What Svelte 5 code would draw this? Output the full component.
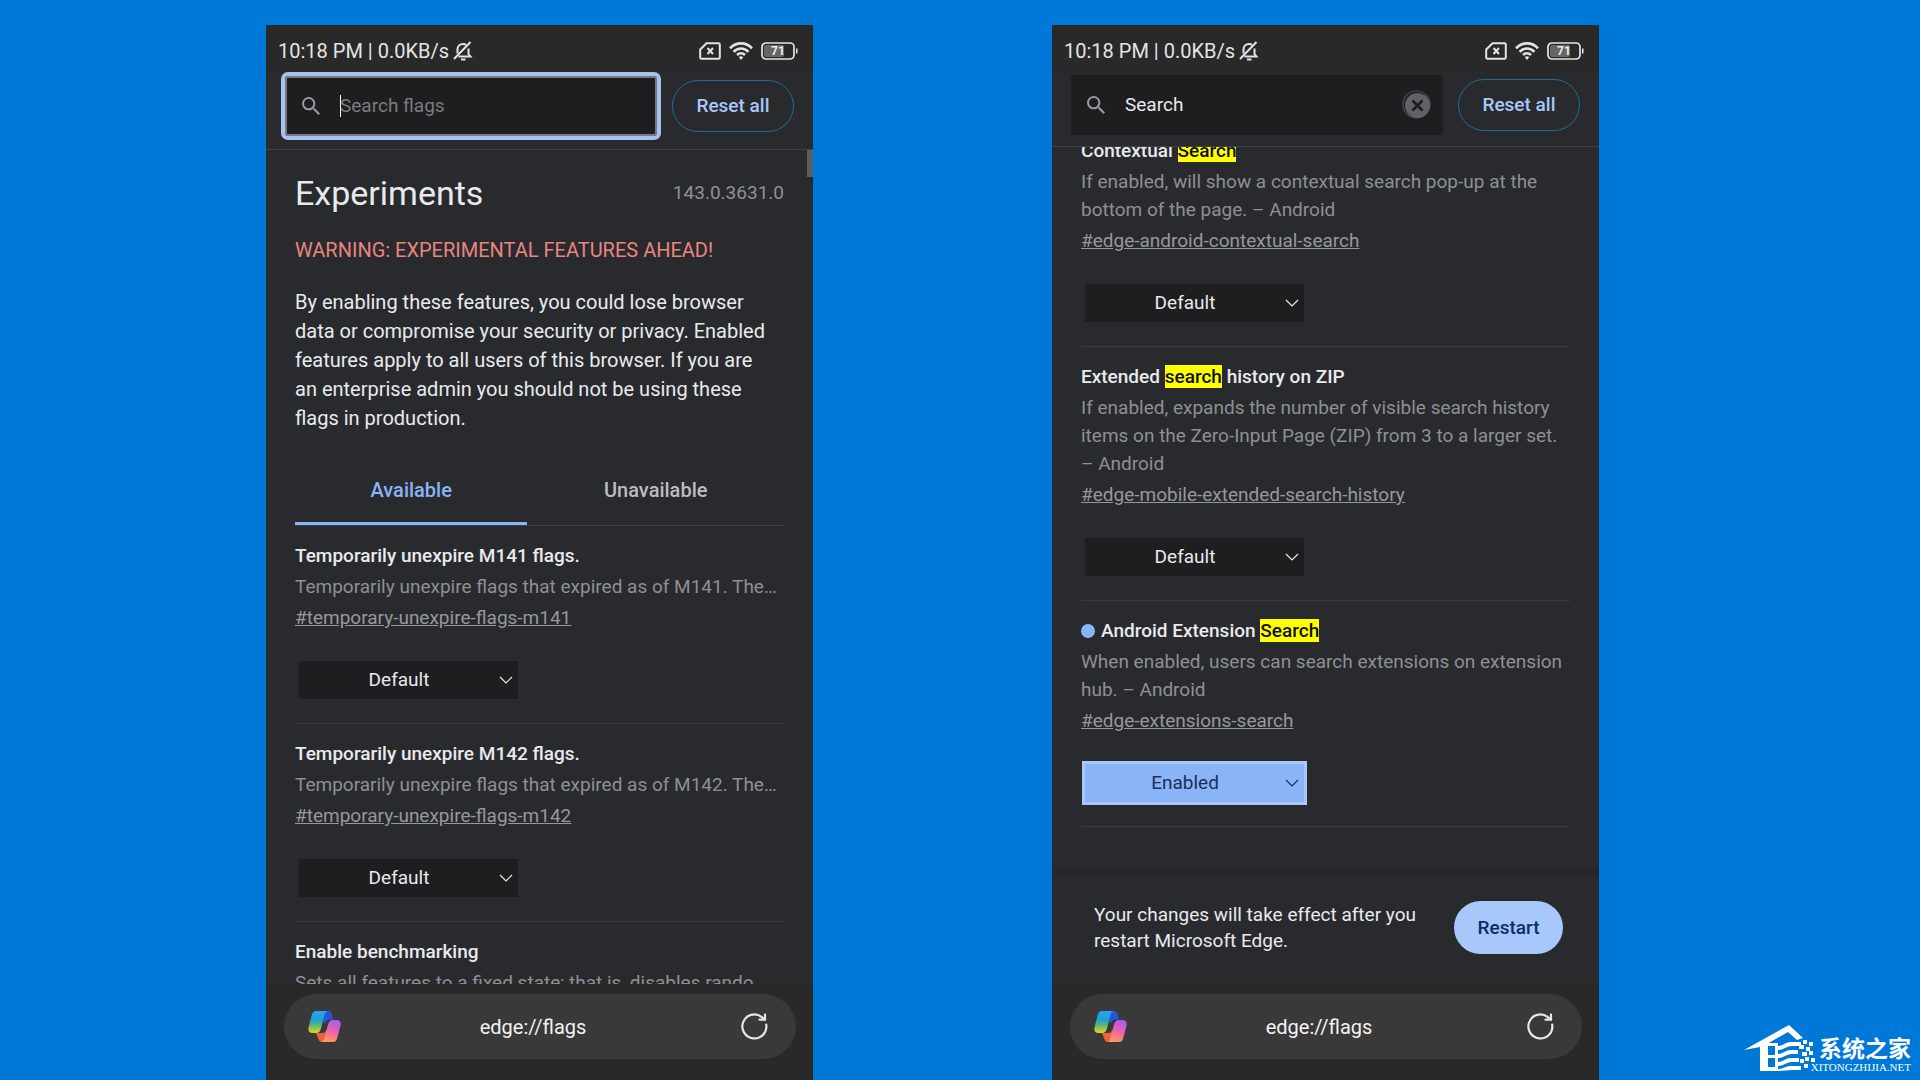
<script lang="ts">
  type Flag = {
    id: string;
    title: string;
    match?: string;
    rest?: string;
    text: string;
    value?: string;
  };

  const available: Flag[] = [
    { id: 'temporary-unexpire-flags-m141', title: 'Temporarily unexpire M141 flags.', text: 'Temporarily unexpire flags that expired as of M141. These flags will be removed soon. – Android' },
    { id: 'temporary-unexpire-flags-m142', title: 'Temporarily unexpire M142 flags.', text: 'Temporarily unexpire flags that expired as of M142. These flags will be removed soon. – Android' },
    { id: 'enable-benchmarking', title: 'Enable benchmarking', text: 'Sets all features to a fixed state; that is, disables randomization for feature states.' }
  ];

  const results: Flag[] = [
    { id: 'edge-android-contextual-search', title: 'Contextual ', match: 'Search', text: 'If enabled, will show a contextual search pop-up at the bottom of the page. – Android' },
    { id: 'edge-mobile-extended-search-history', title: 'Extended ', match: 'search', rest: ' history on ZIP', text: 'If enabled, expands the number of visible search history items on the Zero-Input Page (ZIP) from 3 to a larger set. – Android' },
    { id: 'edge-extensions-search', title: 'Android Extension ', match: 'Search', text: 'When enabled, users can search extensions on extension hub. – Android', value: 'Enabled' }
  ];

  let query = $state('Search');
</script>

{#snippet statusBar()}
  <div class="status">
    <span>10:18 PM | 0.0KB/s</span>
    <svg class="bell" width="20" height="20" viewBox="0 0 20 20" fill="none" stroke="#e4e4e4" stroke-width="2">
      <path d="M4.5 12.5V8.5C4.5 5 7 3 10 3c1.2 0 2.3.3 3.1.8M15.5 7.5V13l2 2.500H5.500" />
      <path d="M1 18L17.500 1" />
      <path d="M8 18.500h4.500" />
    </svg>
    <div class="status-icons">
      <svg width="22" height="18" viewBox="0 0 22 18" fill="none" stroke="#e4e4e4" stroke-width="2">
        <path d="M7.500 1.200H19.500a1.300 1.300 0 0 1 1.300 1.300V15.500a1.300 1.300 0 0 1-1.300 1.300H2.500A1.300 1.300 0 0 1 1.200 15.500V7.500z" />
        <path d="M8.500 6l5.500 6M14 6l-5.500 6" />
      </svg>
      <svg width="24" height="18" viewBox="0 0 24 18" fill="none" stroke="#e4e4e4" stroke-width="2.600">
        <path d="M1 6.300C7-.3 17-.3 23 6.300" />
        <path d="M4.600 9.800c4.300-4.400 10.500-4.400 14.800 0" />
        <path d="M8 13c2.400-2.300 5.600-2.300 8 0" />
        <path d="M9.800 15.200L12 18l2.200-2.800c-1.200-1.200-3.200-1.200-4.400 0z" fill="#e4e4e4" stroke="none" />
      </svg>
      <svg width="37" height="18" viewBox="0 0 37 18">
        <rect x="3" y="3" width="20" height="12" rx="2" fill="#666" />
        <rect x="1" y="1" width="32" height="16" rx="4" fill="none" stroke="#e4e4e4" stroke-width="1.700" />
        <path d="M35 6.500h1.500v5H35z" fill="#e4e4e4" />
        <text x="17" y="13" text-anchor="middle" font-size="12" font-weight="700" fill="#eee">71</text>
      </svg>
    </div>
  </div>
{/snippet}

{#snippet searchIcon()}
  <svg class="magnifier" width="18" height="18" viewBox="3 3 17.500 17.500" fill="#9a9b9e">
    <path d="M15.500 14h-.79l-.28-.27A6.470 6.470 0 0 0 16 9.500 6.500 6.500 0 1 0 9.500 16c1.610 0 3.090-.59 4.230-1.570l.27.28v.79l5 4.990L20.490 19l-4.990-5zm-6 0C7.010 14 5 11.990 5 9.500S7.010 5 9.500 5 14 7.010 14 9.500 11.990 14 9.500 14z" />
  </svg>
{/snippet}

{#snippet flagRow(flag: Flag, clamp: boolean)}
  <section class="flag">
    <h3>
      {#if flag.value}<span class="dot"></span>{/if}
      <label for={flag.id}>{flag.title}{#if flag.match}<mark>{flag.match}</mark>{/if}{flag.rest ?? ''}</label>
    </h3>
    <p class:clamp>{flag.text}</p>
    <a href="#{flag.id}">#{flag.id}</a>
    <div class="choice" class:changed={flag.value}>
      <select id={flag.id} value={flag.value ?? 'Default'}>
        <option>Default</option>
        <option>Enabled</option>
        <option>Disabled</option>
      </select>
      <svg width="14" height="8" viewBox="0 0 14 8" fill="none" stroke="currentColor" stroke-width="1.200">
        <path d="M1 1l6 6 6-6" />
      </svg>
    </div>
  </section>
{/snippet}

{#snippet addressBar(name: string)}
  <footer class="bottom">
    <div class="pill">
      <button class="icon-button" aria-label="Copilot">
        <svg width="33" height="31" viewBox="0 0 33 31">
          <defs>
            <linearGradient id="{name}-cool" x1="0" y1="0" x2="0" y2="1">
              <stop offset="0" stop-color="#2aa5ee" />
              <stop offset=".4" stop-color="#1f9fd0" />
              <stop offset=".7" stop-color="#6abf62" />
              <stop offset="1" stop-color="#e8d32c" />
            </linearGradient>
            <linearGradient id="{name}-warm" x1=".6" y1="0" x2=".3" y2="1">
              <stop offset="0" stop-color="#a95cf0" />
              <stop offset=".5" stop-color="#ee62a6" />
              <stop offset="1" stop-color="#fda05c" />
            </linearGradient>
          </defs>
          <path d="M17 0h3c2 0 3 1 3.600 3l1.600 5.500h-3c-3 0-4.500 1.500-5.200 4L14 9z" fill="#2158d6" />
          <path d="M8 22h6c2.500 0 3.500-1 4.300-3.500L20 24l-3 7h-3c-2 0-3-1-3.600-3z" fill="#f0603a" />
          <path d="M8 0h12c-1.800 0-2.800 1.500-3.500 4L13 17.500c-.9 3-2.300 4.500-5 4.500H4.500C1 22-.3 19.500.6 16L3.600 4.500C4.500 1.500 5.500 0 8 0z" fill="url(#{name}-cool)" />
          <path d="M25 9h3.500c3.500 0 4.800 2.500 3.900 6l-3 11.500c-.9 3-1.900 4.500-4.400 4.500H13c1.800 0 2.800-1.500 3.500-4L20 13.500c.9-3 2.300-4.500 5-4.500z" fill="url(#{name}-warm)" />
        </svg>
      </button>
      <span class="address">edge://flags</span>
      <button class="icon-button reload" aria-label="Reload">
        <svg width="27" height="27" viewBox="0 0 27 27" fill="none" stroke="#e6e6e6" stroke-width="2.200" stroke-linecap="round" stroke-linejoin="round">
          <path d="M25.200 11.500A12 12 0 1 1 20.500 3.800l3.500 2.700" />
          <path d="M24 1.500v5.200h-5.500" />
        </svg>
      </button>
    </div>
  </footer>
{/snippet}

<main>
  <div class="phone">
    {@render statusBar()}
    <header class="toolbar focused">
      <div class="search">
        {@render searchIcon()}
        <span class="caret"></span>
        <input type="text" placeholder="Search flags" aria-label="Search flags" />
      </div>
      <button class="reset">Reset all</button>
    </header>
    <div class="scroller">
      <div class="thumb"></div>
      <div class="intro">
        <div class="heading">
          <h1>Experiments</h1>
          <span>143.0.3631.0</span>
        </div>
        <p class="warning">WARNING: EXPERIMENTAL FEATURES AHEAD!</p>
        <p class="blurb">
          By enabling these features, you could lose browser data or compromise your security or privacy. Enabled
          features apply to all users of this browser. If you are an enterprise admin you should not be using these
          flags in production.
        </p>
        <div class="tabs" role="tablist">
          <button class="selected" role="tab" aria-selected="true">Available</button>
          <button role="tab" aria-selected="false">Unavailable</button>
        </div>
      </div>
      {#each available as flag (flag.id)}
        {@render flagRow(flag, true)}
      {/each}
    </div>
    {@render addressBar('left')}
  </div>

  <div class="phone">
    {@render statusBar()}
    <header class="toolbar">
      <div class="search">
        {@render searchIcon()}
        <input type="text" bind:value={query} aria-label="Search flags" />
        <button class="icon-button" aria-label="Clear search" onclick={() => (query = '')}>
          <svg width="30" height="30" viewBox="0 0 30 30">
            <circle cx="14.500" cy="14.500" r="13.500" fill="none" stroke="#4c4d50" stroke-width="1.200" />
            <circle cx="15.500" cy="15.500" r="12.500" fill="#5f6368" />
            <path d="M10.500 10.500l10 10M20.500 10.500l-10 10" stroke="#1c1c1e" stroke-width="2.600" />
          </svg>
        </button>
      </div>
      <button class="reset">Reset all</button>
    </header>
    <div class="scroller at-end">
      {#each results as flag (flag.id)}
        {@render flagRow(flag, false)}
      {/each}
    </div>
    <div class="restart">
      <p>Your changes will take effect after you restart Microsoft Edge.</p>
      <button>Restart</button>
    </div>
    {@render addressBar('right')}
  </div>

  <div class="watermark">
    <svg width="74" height="48" viewBox="0 0 74 48" fill="#fff">
      <path d="M1 25L46 0l14 13-6 2-9-8-23 13v26h-5V22z" />
      <path fill-rule="evenodd" d="M18 18h17v28H18zM25 21h7v9h-7zM25 33h7v9h-7z" />
      <path d="M34 21c7 0 8-4 14-4h10v4H49c-6 0-7 4-15 4zM34 29c7 0 8-4 14-4h7v4h-6c-6 0-7 4-15 4zM34 37c7 0 8-4 14-4h8v4h-7c-6 0-7 4-15 4zM34 44c7 0 8-3 14-3h10v4H49c-4 0-8 1-15 1z" />
      <path d="M60 15h4v4h-4zM66 17h4v4h-4zM56 20h5v4h-5zM63 22h4v4h-4zM59 27h5v4h-5zM66 26h4v4h-4zM62 32h4v4h-4zM68 33h4v4h-4zM57 34h4v4h-4zM61 39h4v4h-4z" />
    </svg>
    <div>
      <strong>系统之家</strong>
      <small>XITONGZHIJIA.NET</small>
    </div>
  </div>
</main>

<style>
  :global(body) {
    margin: 0;
    background: #0078d7;
  }

  main {
    box-sizing: border-box;
    height: 100vh;
    padding: 25px 321px 0 266px;
    display: grid;
    grid-template-columns: 1fr 1fr;
    grid-template-rows: minmax(0, 1fr);
    gap: 239px;
    font-family: Roboto, sans-serif;
    font-size: 19px;
    line-height: 28px;
    color: #e8eaed;
    overflow: hidden;
    position: relative;
  }

  h1, h3, p {
    margin: 0;
  }

  button, input, select {
    font: inherit;
    color: inherit;
    border: 0;
    padding: 0;
    background: none;
  }

  svg {
    display: block;
    flex: none;
  }

  .phone {
    display: flex;
    flex-direction: column;
    min-width: 0;
    background: #292a2d;
  }

  /* status bar */
  .status {
    display: flex;
    align-items: center;
    height: 46px;
    padding: 6px 15px 0 12px;
    box-sizing: border-box;
    background: #292929;
    color: #e4e4e4;
    font-size: 20px;
  }
  .bell {
    margin-left: 4px;
  }
  .status-icons {
    margin-left: auto;
    display: flex;
    gap: 8px;
  }

  /* search toolbar */
  .toolbar {
    display: flex;
    align-items: center;
    gap: 15px;
    padding: 4px 19px 11px;
    border-bottom: 1px solid #3f4043;
  }
  .toolbar.focused {
    padding: 5px 19px 13px;
  }
  .search {
    flex: 1;
    min-width: 0;
    height: 60px;
    box-sizing: border-box;
    padding: 0 11px 0 16px;
    display: flex;
    align-items: center;
    background: #1e1e20;
    border-radius: 3px;
  }
  .focused .search {
    padding-left: 17px;
    outline: 4px solid #a8c0ee;
    box-shadow: inset 0 0 0 2px #77797e;
  }
  .magnifier {
    margin-right: 20px;
  }
  .caret {
    width: 1px;
    height: 22px;
    margin-right: -1px;
    background: #fff;
  }
  .search input {
    flex: 1;
    min-width: 0;
    outline: none;
  }
  .search input::placeholder {
    color: #7b7c7f;
    opacity: 1;
  }
  .icon-button {
    display: flex;
  }
  .reset {
    width: 122px;
    height: 52px;
    border: 1px solid #1f6f8f;
    border-radius: 26px;
    color: #a8c7fa;
    font-weight: 500;
  }

  /* scrolled page */
  .scroller {
    flex: 1;
    min-height: 0;
    padding: 0 29px;
    overflow: hidden;
    position: relative;
  }
  .scroller.at-end {
    display: flex;
    flex-direction: column;
    justify-content: flex-end;
    padding-bottom: 44px;
  }
  .thumb {
    position: absolute;
    top: 0;
    right: 0;
    width: 6px;
    height: 27px;
    background: #5c5d60;
  }
  .heading {
    display: flex;
    align-items: center;
    justify-content: space-between;
    padding: 23px 0;
  }
  .heading span {
    color: #8f9195;
  }
  h1 {
    font-size: 34px;
    line-height: 40px;
    font-weight: 400;
  }
  .warning {
    font-size: 20px;
    color: #e8867f;
  }
  .blurb {
    margin: 24px 0 21px;
    padding-right: 8px;
    font-size: 20px;
    line-height: 29px;
  }
  .tabs {
    display: grid;
    grid-template-columns: 232fr 256fr;
    height: 71px;
    border-bottom: 1px solid #3f4043;
    font-size: 20px;
    font-weight: 500;
    color: #bcbdbf;
  }
  .tabs button {
    padding-top: 3px;
    border-bottom: 3px solid transparent;
  }
  .tabs .selected {
    color: #8ab4f8;
    border-color: #8ab4f8;
  }

  /* flag entries */
  .flag {
    padding: 16px 0 24px;
    border-bottom: 1px solid #3a3b3e;
  }
  .flag h3 {
    display: flex;
    align-items: center;
    gap: 6px;
    font-size: 19px;
    font-weight: 500;
  }
  .dot {
    width: 14px;
    height: 14px;
    border-radius: 50%;
    background: #8ab4f8;
  }
  mark {
    background: #ff0;
    color: #111;
  }
  .flag p {
    margin: 3px 0;
    color: #8e9094;
  }
  .flag .clamp {
    margin-right: 2px;
    white-space: nowrap;
    overflow: hidden;
    text-overflow: ellipsis;
  }
  .flag a {
    display: block;
    width: fit-content;
    color: #96989c;
  }
  .choice {
    display: grid;
    align-items: center;
    width: 219px;
    height: 38px;
    margin: 29px 0 0 4px;
    background: #1e1e20;
  }
  .choice > * {
    grid-area: 1 / 1;
  }
  .choice select {
    appearance: none;
    width: 100%;
    height: 100%;
    padding-right: 19px;
    text-align: center;
    text-align-last: center;
  }
  .choice svg {
    justify-self: end;
    margin-right: 5px;
    pointer-events: none;
  }
  .choice.changed {
    background: #8ab4f8;
    color: #1b2f52;
    outline: 3px solid #a9c7fb;
  }

  /* restart prompt */
  .restart {
    display: flex;
    align-items: center;
    justify-content: space-between;
    height: 113px;
    padding: 0 36px 2px 42px;
    box-sizing: border-box;
    border-top: 2px solid #242528;
  }
  .restart p {
    width: 332px;
    line-height: 26px;
  }
  .restart button {
    width: 109px;
    height: 53px;
    border-radius: 27px;
    background: #a8c7fa;
    color: #062e6f;
    font-weight: 500;
  }

  /* address bar */
  .bottom {
    padding: 10px 17px 21px 18px;
    background: #292929;
  }
  .pill {
    display: flex;
    align-items: center;
    height: 65px;
    padding: 0 28px 0 24px;
    box-sizing: border-box;
    border-radius: 33px;
    background: #393939;
  }
  .address {
    flex: 1;
    text-align: center;
    font-size: 20px;
    color: #f2f2f2;
  }
  .reload {
    padding-left: 16px;
  }

  .watermark {
    position: absolute;
    right: 9px;
    bottom: 7px;
    display: flex;
    align-items: flex-end;
    color: #fff;
  }
  .watermark div {
    display: flex;
    flex-direction: column;
    align-items: flex-end;
    margin-left: -6px;
  }
  .watermark strong {
    font: 700 23px/28px "Noto Sans CJK SC", sans-serif;
  }
  .watermark small {
    font: 11px/12px "Liberation Serif", serif;
  }
</style>
